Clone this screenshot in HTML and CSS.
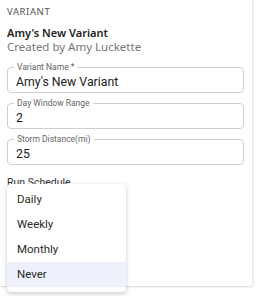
FILE: index.html
```html
<!DOCTYPE html>
<html>
<head>
<meta charset="utf-8">
<link rel="stylesheet" href="styles.css">
</head>
<body>
<div class="card">
  <div class="section-title">VARIANT</div>
  <div class="variant-name">Amy's New Variant</div>
  <div class="created">Created by Amy Luckette</div>
  <div class="fields">
    <div class="field">
      <span class="label">Variant Name *</span>
      <div class="value">Amy's New Variant</div>
    </div>
    <div class="field">
      <span class="label">Day Window Range</span>
      <div class="value">2</div>
    </div>
    <div class="field">
      <span class="label">Storm Distance(mi)</span>
      <div class="value">25</div>
    </div>
  </div>
  <div class="schedule-label">Run Schedule</div>
  <div class="menu">
    <div class="item">Daily</div>
    <div class="item">Weekly</div>
    <div class="item">Monthly</div>
    <div class="item active">Never</div>
  </div>
</div>
</body>
</html>
```

FILE: styles.css
```css
html, body {
  margin: 0;
  padding: 0;
  background: #ffffff;
}
body {
  width: 258px;
  height: 296px;
  overflow: hidden;
  font-family: "Noto Sans", "Liberation Sans", sans-serif;
}
.card {
  position: relative;
  width: 253px;
  height: 287px;
  background: #fff;
  border-right: 1px solid #ececec;
  border-bottom: 1px solid #e2e2e2;
  border-bottom-right-radius: 4px;
  box-shadow: 1px 1px 2px rgba(0,0,0,0.06);
  padding: 0 0 0 7px;
  box-sizing: border-box;
}
.section-title {
  padding-top: 6px;
  font-size: 9.5px;
  letter-spacing: 0.6px;
  color: #555;
  line-height: 12px;
}
.variant-name {
  margin-top: 8px;
  font-size: 11px;
  font-weight: 600;
  color: #222;
  line-height: 14px;
}
.created {
  font-size: 11.5px;
  color: #777;
  line-height: 14px;
}
.fields {
  margin-top: 13px;
  display: flex;
  flex-direction: column;
  gap: 10px;
  width: 237px;
}
.field {
  position: relative;
  height: 26px;
  border: 1px solid #cfcfcf;
  border-radius: 4px;
  box-sizing: border-box;
  padding: 0 8px;
  display: flex;
  align-items: center;
}
.label {
  position: absolute;
  left: 6px;
  top: -6px;
  padding: 0 3px;
  background: #fff;
  font-family: Roboto, "Liberation Sans", sans-serif;
  font-size: 8.5px;
  line-height: 10px;
  color: #666;
}
.value {
  font-family: Roboto, "Liberation Sans", sans-serif;
  font-size: 12.3px;
  color: #222;
  padding-top: 3px;
}
.schedule-label {
  margin-top: 11px;
  font-family: Roboto, "Liberation Sans", sans-serif;
  font-size: 10.5px;
  color: #333;
  line-height: 13px;
}
.menu {
  position: absolute;
  left: 7px;
  top: 184px;
  width: 119px;
  padding: 3px 0 5px;
  background: #fff;
  border-radius: 4px;
  box-shadow: 0 2px 5px rgba(0,0,0,0.2), 0 0 1px rgba(0,0,0,0.15);
  font-family: Roboto, "Liberation Sans", sans-serif;
}
.item {
  height: 25px;
  line-height: 25px;
  padding-left: 10px;
  font-size: 11.5px;
  color: #2a2a2a;
}
.item.active {
  background: #eef0fc;
}
```
